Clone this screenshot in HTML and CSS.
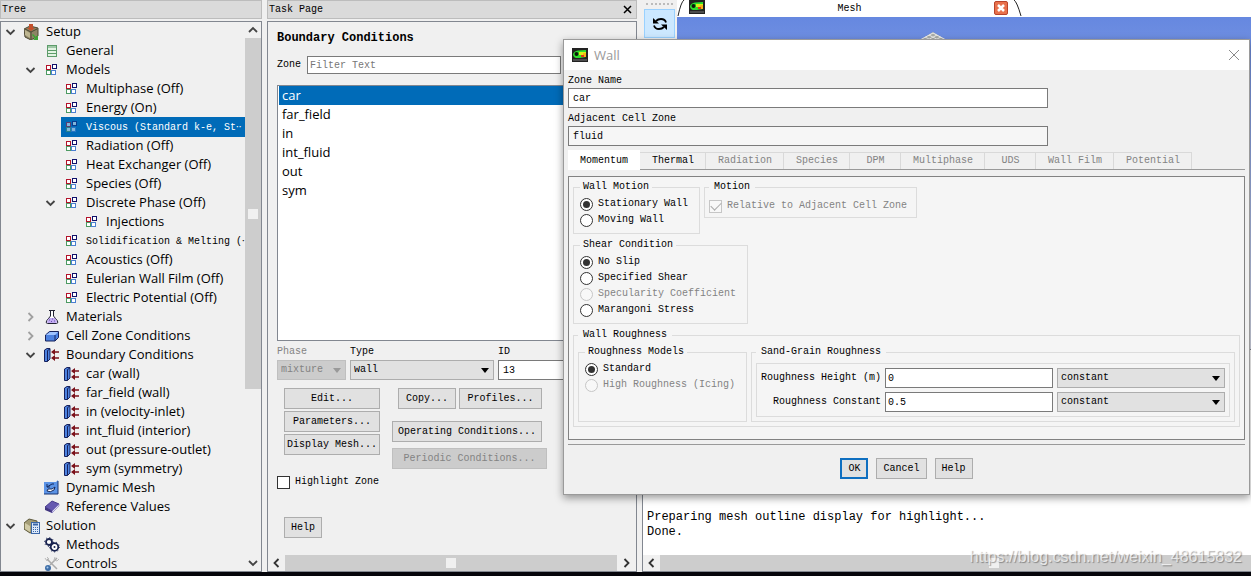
FILE: index.html
```html
<!DOCTYPE html>
<html lang="en">
<head>
    <meta charset="UTF-8">
    <meta name="viewport" content="width=device-width, initial-scale=1.0">
    <title>Boundary Conditions</title>
    <link rel="stylesheet" href="styles.css">
</head>
<body>
    <!-- Icon definitions -->
    <svg class="defs" width="0" height="0" aria-hidden="true">
        <symbol id="open" viewBox="0 0 16 16"><path d="M4 6l4 4 4-4" fill="none" stroke="#444" stroke-width="1.8"/></symbol>
        <symbol id="closed" viewBox="0 0 16 16"><path d="M6 4l4 4-4 4" fill="none" stroke="#a0a0a0" stroke-width="1.8"/></symbol>
        <symbol id="setup" viewBox="0 0 16 16">
            <path d="M0 5l6-3 8 2v8l-7 4-6-3z" fill="#8d8566" stroke="#4c4732"/>
            <path d="M1 5l6 3 6-3M7 8v7" fill="none" stroke="#4c4732"/>
            <path d="M1 6l5 3v5l-5-3z" fill="#bdb590"/>
            <path d="M5 0h4v4h2L7 7 3 4h2z" fill="#c4502c"/>
            <path d="M9 10l3 3 2-2v5h-5l2-2-3-3z" fill="#3fa535"/>
        </symbol>
        <symbol id="general" viewBox="0 0 16 16">
            <rect x="3.5" y="2.5" width="9" height="11" fill="#e3f3e3" stroke="#5d9c6a"/>
            <path d="M3 4h10M3 7.5h10M3 10.5h10" stroke="#5d9c6a"/>
        </symbol>
        <symbol id="model" viewBox="0 0 16 16">
            <rect x="2.5" y="3.5" width="4" height="4" fill="#fff" stroke="#b3122a"/>
            <rect x="8.5" y="2.5" width="4" height="4" fill="#fff" stroke="#10106a"/>
            <rect x="2.5" y="8.5" width="4" height="4" fill="#fff" stroke="#4c9a62"/>
            <rect x="7.5" y="8.5" width="4" height="4" fill="#fff" stroke="#4a7fd0"/>
        </symbol>
        <symbol id="materials" viewBox="0 0 16 16">
            <path d="M5 1.5h6M6.5 2v5L2.5 12q-1 2.5 1 2.5h9q2 0 1-2.5L9.5 7V2" fill="#fff" stroke="#223"/>
            <path d="M5 9h6l2 3.500q0 1.500-1 1.500H4q-1 0-1-1.500z" fill="#c3adf2"/>
            <path d="M5 11h1M8 10h1M7 12.500h1M10 12h1" stroke="#6a4fb0"/>
        </symbol>
        <symbol id="cell" viewBox="0 0 16 16">
            <path d="M1.5 7l4-3.500h9v6L11 13H1.500z" fill="#4d82e0" stroke="#17225c"/>
            <path d="M2 7l4-3h8l-3 3z" fill="#9fc3ff"/><path d="M11 7v6" stroke="#17225c"/>
        </symbol>
        <symbol id="bc" viewBox="0 0 16 16">
            <path d="M.5 3L3 1.500h3V12l-2.500 2.500h-3z" fill="#4d82e0" stroke="#17225c"/>
            <path d="M3.500 3.500v11M3.500 3.500L6 2" stroke="#17225c"/>
            <path d="M9 5h6M9 11h6" stroke="#7a0f18" stroke-width="1.500"/>
            <path d="M7 5l4-3v6zM7 11l4-3v6z" fill="#7a0f18"/>
        </symbol>
        <symbol id="dynamic" viewBox="0 0 16 16">
            <path d="M0 2h12l2-2v14H0z" fill="#5b93e6"/><path d="M0 14h14V1" fill="none" stroke="#1a3470"/>
            <path d="M3 11q3 2 7-1l1-3-3 2-4 0z" fill="#fff" stroke="#15295c"/>
            <path d="M3 7l5-3h2M3 4v3h3" fill="none" stroke="#15295c"/>
        </symbol>
        <symbol id="reference" viewBox="0 0 16 16">
            <path d="M1 8l7-6 7 3-7 7z" fill="#6558b0" stroke="#483c8c"/>
            <path d="M1 8v3l7 3v-2z" fill="#413580"/><path d="M8 12l7-7v2l-7 7z" fill="#dcd8ee" stroke="#6558b0" stroke-width=".5"/>
        </symbol>
        <symbol id="solution" viewBox="0 0 16 16">
            <path d="M0 5l5-4 8 2v10l-7 2-6-4z" fill="#a39c74" stroke="#5f5a3d"/><path d="M1 5l5 3v6l-5-3z" fill="#d0caa5"/>
            <rect x="7.500" y="4.500" width="8" height="11" fill="#dce9fa" stroke="#3b67a8"/>
            <path d="M9 6.500h5" stroke="#3b67a8" stroke-width="2"/>
            <path d="M9 9.500h5M9 11.500h5M9 13.500h5" stroke="#3b67a8" stroke-dasharray="1 1"/>
        </symbol>
        <symbol id="methods" viewBox="0 0 16 16">
            <circle cx="5" cy="5" r="3" fill="#fff" stroke="#18224f" stroke-width="1.800"/>
            <circle cx="5" cy="5" r="4.500" fill="none" stroke="#18224f" stroke-dasharray="1 2.500"/>
            <circle cx="10.500" cy="10" r="3.800" fill="#fff" stroke="#18224f" stroke-width="1.800"/>
            <circle cx="10.500" cy="10" r="5" fill="none" stroke="#18224f" stroke-dasharray="1 2.500"/>
            <circle cx="10.500" cy="10" r="1" fill="#18224f"/>
        </symbol>
        <symbol id="controls" viewBox="0 0 16 16">
            <path d="M3 3l10 10M13 2L6 9" stroke="#aaa" stroke-width="1.500"/>
            <path d="M1 2l2 3 2-2-2-2M11 1l-1 3 3 1 2-2" fill="none" stroke="#bbb"/>
            <circle cx="4" cy="12" r="3" fill="#3f6fa8"/><circle cx="3.500" cy="11.500" r="1" fill="#a9c8ea"/>
        </symbol>
        <symbol id="fluent" viewBox="0 0 16 14">
            <path d="M0 0h16v14H0z" fill="#222"/>
            <path d="M1 6q1-3 5-3.500L14 2v7l-6 1H4Q1 9 1 6z" fill="#2ee02e"/>
            <path d="M7 4h7v3H7z" fill="#d8f018"/>
            <path d="M11 5h3v4h-3z" fill="#f5b414"/>
            <path d="M9 7h3v2H9z" fill="#e03a18"/>
            <circle cx="4.500" cy="6" r="2" fill="#0a1a0a"/>
            <path d="M1 12h14" stroke="#777"/>
        </symbol>
    </svg>

    <div class="app">
        <section class="pane">
            <h2 class="pane-title">Tree</h2>
            <div class="pane-body tree">
                <ul class="tree-list">
                    <li>
                        <div class="row"><svg class="exp"><use href="#open"/></svg><span class="label"><svg><use href="#setup"/></svg>Setup</span></div>
                        <ul>
                            <li><div class="row"><span class="exp"></span><span class="label"><svg><use href="#general"/></svg>General</span></div></li>
                            <li>
                                <div class="row"><svg class="exp"><use href="#open"/></svg><span class="label"><svg><use href="#model"/></svg>Models</span></div>
                                <ul>
                                    <li><div class="row"><span class="exp"></span><span class="label"><svg><use href="#model"/></svg>Multiphase (Off)</span></div></li>
                                    <li><div class="row"><span class="exp"></span><span class="label"><svg><use href="#model"/></svg>Energy (On)</span></div></li>
                                    <li><div class="row"><span class="exp"></span><span class="label mono selected"><svg><use href="#model"/></svg><span>Viscous (Standard k-e, St<span class="dots">··</span></span></span></div></li>
                                    <li><div class="row"><span class="exp"></span><span class="label"><svg><use href="#model"/></svg>Radiation (Off)</span></div></li>
                                    <li><div class="row"><span class="exp"></span><span class="label"><svg><use href="#model"/></svg>Heat Exchanger (Off)</span></div></li>
                                    <li><div class="row"><span class="exp"></span><span class="label"><svg><use href="#model"/></svg>Species (Off)</span></div></li>
                                    <li>
                                        <div class="row"><svg class="exp"><use href="#open"/></svg><span class="label"><svg><use href="#model"/></svg>Discrete Phase (Off)</span></div>
                                        <ul>
                                            <li><div class="row"><span class="exp"></span><span class="label"><svg><use href="#model"/></svg>Injections</span></div></li>
                                        </ul>
                                    </li>
                                    <li><div class="row"><span class="exp"></span><span class="label mono"><svg><use href="#model"/></svg><span>Solidification &amp; Melting (<span class="dots">·</span></span></span></div></li>
                                    <li><div class="row"><span class="exp"></span><span class="label"><svg><use href="#model"/></svg>Acoustics (Off)</span></div></li>
                                    <li><div class="row"><span class="exp"></span><span class="label"><svg><use href="#model"/></svg>Eulerian Wall Film (Off)</span></div></li>
                                    <li><div class="row"><span class="exp"></span><span class="label"><svg><use href="#model"/></svg>Electric Potential (Off)</span></div></li>
                                </ul>
                            </li>
                            <li><div class="row"><svg class="exp"><use href="#closed"/></svg><span class="label"><svg><use href="#materials"/></svg>Materials</span></div></li>
                            <li><div class="row"><svg class="exp"><use href="#closed"/></svg><span class="label"><svg><use href="#cell"/></svg>Cell Zone Conditions</span></div></li>
                            <li>
                                <div class="row"><svg class="exp"><use href="#open"/></svg><span class="label"><svg><use href="#bc"/></svg>Boundary Conditions</span></div>
                                <ul>
                                    <li><div class="row"><span class="exp"></span><span class="label"><svg><use href="#bc"/></svg>car (wall)</span></div></li>
                                    <li><div class="row"><span class="exp"></span><span class="label"><svg><use href="#bc"/></svg>far_field (wall)</span></div></li>
                                    <li><div class="row"><span class="exp"></span><span class="label"><svg><use href="#bc"/></svg>in (velocity-inlet)</span></div></li>
                                    <li><div class="row"><span class="exp"></span><span class="label"><svg><use href="#bc"/></svg>int_fluid (interior)</span></div></li>
                                    <li><div class="row"><span class="exp"></span><span class="label"><svg><use href="#bc"/></svg>out (pressure-outlet)</span></div></li>
                                    <li><div class="row"><span class="exp"></span><span class="label"><svg><use href="#bc"/></svg>sym (symmetry)</span></div></li>
                                </ul>
                            </li>
                            <li><div class="row"><span class="exp"></span><span class="label"><svg><use href="#dynamic"/></svg>Dynamic Mesh</span></div></li>
                            <li><div class="row"><span class="exp"></span><span class="label"><svg><use href="#reference"/></svg>Reference Values</span></div></li>
                        </ul>
                    </li>
                    <li>
                        <div class="row"><svg class="exp"><use href="#open"/></svg><span class="label"><svg><use href="#solution"/></svg>Solution</span></div>
                        <ul>
                            <li><div class="row"><span class="exp"></span><span class="label"><svg><use href="#methods"/></svg>Methods</span></div></li>
                            <li><div class="row"><span class="exp"></span><span class="label"><svg><use href="#controls"/></svg>Controls</span></div></li>
                        </ul>
                    </li>
                </ul>
                <div class="vscroll">
                    <svg width="16" height="16" viewBox="0 0 16 16"><path d="M4 10l4-4 4 4" fill="none" stroke="#444" stroke-width="1.8"/></svg>
                    <div class="thumb"><i></i></div>
                    <svg width="16" height="16"><use href="#open"/></svg>
                </div>
            </div>
        </section>

        <section class="pane">
            <h2 class="pane-title">Task Page
                <button class="pane-close" type="button" aria-label="Close"><svg width="9" height="9" viewBox="0 0 9 9"><path d="M1 1l7 7M8 1L1 8" stroke="#000" stroke-width="1.5"/></svg></button>
            </h2>
            <div class="pane-body task">
                <form class="task-form">
                    <h1>Boundary Conditions</h1>
                    <div class="zone-filter">
                        <label for="filter">Zone</label>
                        <input type="text" id="filter" placeholder="Filter Text">
                    </div>
                    <ul class="zones">
                        <li class="selected">car</li>
                        <li>far_field</li>
                        <li>in</li>
                        <li>int_fluid</li>
                        <li>out</li>
                        <li>sym</li>
                    </ul>
                    <div class="zone-info">
                        <label class="off" for="phase">Phase</label>
                        <label for="type">Type</label>
                        <label for="zoneId">ID</label>
                        <span class="select"><select id="phase" disabled><option>mixture</option></select></span>
                        <span class="select"><select id="type"><option>wall</option></select></span>
                        <input type="text" id="zoneId" value="13">
                    </div>
                    <div class="actions">
                        <div class="actions-left">
                            <button type="button">Edit...</button>
                            <button type="button">Parameters...</button>
                            <button type="button">Display Mesh...</button>
                        </div>
                        <div class="actions-right">
                            <div class="pair">
                                <button type="button">Copy...</button>
                                <button type="button">Profiles...</button>
                            </div>
                            <button class="operating" type="button">Operating Conditions...</button>
                            <button class="periodic" type="button" disabled>Periodic Conditions...</button>
                        </div>
                    </div>
                    <label class="check highlight"><input type="checkbox"> Highlight Zone</label>
                    <button class="help" type="button">Help</button>
                </form>
                <div class="hscroll">
                    <svg width="17" height="16" viewBox="0 0 16 16"><path d="M10 4L6 8l4 4" fill="none" stroke="#333" stroke-width="1.8"/></svg>
                    <div class="thumb"><i></i></div>
                    <svg width="19" height="16" viewBox="0 0 16 16"><path d="M6 4l4 4-4 4" fill="none" stroke="#333" stroke-width="1.8"/></svg>
                </div>
            </div>
        </section>

        <section class="graphics">
            <div class="view">
                <div class="toolbar">
                    <button type="button" aria-label="Refresh">
                        <svg width="16" height="16" viewBox="0 0 16 16">
                            <path d="M14 6.500Q13 3 9 3 6 3 4 5M2 9.500Q3 13 7 13q3 0 5-2" fill="none" stroke="#000" stroke-width="1.8"/>
                            <path d="M1 2v5.500h6zM15 14V8.500H9z"/>
                        </svg>
                    </button>
                </div>
                <div class="window">
                    <div class="tab-bar">
                        <svg class="edge" width="8" height="17" viewBox="0 0 8 17"><path d="M1 16Q4 2 7 0" fill="none" stroke="#222"/></svg>
                        <svg class="tab-icon" width="16" height="14"><use href="#fluent"/></svg>
                        <span class="tab-name">Mesh</span>
                        <button type="button" aria-label="Close tab"><svg width="14" height="14" viewBox="0 0 14 14"><rect x=".5" y=".5" width="13" height="13" rx="1.5" fill="#e8714c" stroke="#b8432a"/><path d="M4 4l6 6M10 4l-6 6" stroke="#fff" stroke-width="2.5"/></svg></button>
                        <svg class="edge" width="8" height="17" viewBox="0 0 8 17"><path d="M0 0Q3 2 7 16" fill="none" stroke="#222"/></svg>
                    </div>
                    <div class="canvas">
                        <svg width="30" height="14" viewBox="0 0 30 14"><path d="M0 9L15 0l15 9-15 5z" fill="#a9ada8"/><path d="M2 8L15 1l13 7M6 10l13-7M11 11l12-6M24 10L11 3M19 11L7 5" fill="none" stroke="#eee"/></svg>
                    </div>
                </div>
            </div>
            <div class="console">
                <pre>Preparing mesh outline display for highlight...
Done.</pre>
                <div class="hscroll">
                    <svg width="17" height="16" viewBox="0 0 16 16"><path d="M10 4L6 8l4 4" fill="none" stroke="#333" stroke-width="1.8"/></svg>
                    <div class="thumb"><i></i></div>
                </div>
            </div>
        </section>
    </div>

    <div class="dialog" role="dialog" aria-labelledby="dialogTitle">
        <div class="dialog-title">
            <svg width="16" height="14"><use href="#fluent"/></svg>
            <span id="dialogTitle">Wall</span>
            <button type="button" aria-label="Close"><svg width="12" height="12" viewBox="0 0 12 12"><path d="M1 1l10 10M11 1L1 11" stroke="#8a8a8a"/></svg></button>
        </div>
        <form class="dialog-body">
            <label for="zoneName">Zone Name</label>
            <input class="wide" type="text" id="zoneName" value="car">
            <label for="adjacent">Adjacent Cell Zone</label>
            <input class="wide" type="text" id="adjacent" value="fluid" readonly>

            <div class="tabs" role="tablist">
                <button class="active" type="button" role="tab">Momentum</button>
                <button type="button" role="tab">Thermal</button>
                <button type="button" role="tab" disabled>Radiation</button>
                <button type="button" role="tab" disabled>Species</button>
                <button type="button" role="tab" disabled>DPM</button>
                <button type="button" role="tab" disabled>Multiphase</button>
                <button type="button" role="tab" disabled>UDS</button>
                <button type="button" role="tab" disabled>Wall Film</button>
                <button type="button" role="tab" disabled>Potential</button>
            </div>

            <div class="panel">
                <div class="panel-row">
                    <fieldset>
                        <legend>Wall Motion</legend>
                        <label class="check"><input type="radio" name="motion" checked> Stationary Wall</label>
                        <label class="check"><input type="radio" name="motion"> Moving Wall</label>
                    </fieldset>
                    <fieldset class="relative">
                        <legend>Motion</legend>
                        <label class="check off"><input type="checkbox" checked disabled> Relative to Adjacent Cell Zone</label>
                    </fieldset>
                </div>
                <div class="panel-row">
                    <fieldset>
                        <legend>Shear Condition</legend>
                        <label class="check"><input type="radio" name="shear" checked> No Slip</label>
                        <label class="check"><input type="radio" name="shear"> Specified Shear</label>
                        <label class="check off"><input type="radio" name="shear" disabled> Specularity Coefficient</label>
                        <label class="check"><input type="radio" name="shear"> Marangoni Stress</label>
                    </fieldset>
                </div>
                <fieldset class="roughness">
                    <legend>Wall Roughness</legend>
                    <div class="roughness-row">
                        <fieldset>
                            <legend>Roughness Models</legend>
                            <label class="check"><input type="radio" name="rough" checked> Standard</label>
                            <label class="check off"><input type="radio" name="rough" disabled> High Roughness (Icing)</label>
                        </fieldset>
                        <fieldset class="sand">
                            <legend>Sand-Grain Roughness</legend>
                            <div class="sand-grid">
                                <label for="height">Roughness Height (m)</label>
                                <input type="text" id="height" value="0">
                                <span class="select"><select aria-label="Height profile"><option>constant</option></select></span>
                                <label for="constant">Roughness Constant</label>
                                <input type="text" id="constant" value="0.5">
                                <span class="select"><select aria-label="Constant profile"><option>constant</option></select></span>
                            </div>
                        </fieldset>
                    </div>
                </fieldset>
            </div>

            <div class="dialog-buttons">
                <button class="default" type="submit">OK</button>
                <button type="button">Cancel</button>
                <button type="button">Help</button>
            </div>
        </form>
    </div>
    <div class="watermark">https://blog.csdn.net/weixin_48615832</div>
</body>
</html>
```
FILE: styles.css
```css
* {
    box-sizing: border-box;
}

body {
    position: relative;
    display: flex;
    height: 100vh;
    margin: 0;
    overflow: hidden;
    border-bottom: 4px solid #05050a;
    background: #f0f0f0;
    color: #000;
    font: 10px/12px "Liberation Mono", monospace;
}

.defs {
    position: absolute;
}

.app {
    flex: 1;
    display: grid;
    grid-template-columns: 262px 370px 1fr;
    gap: 5px;
    min-height: 0;
}

h1, h2, ul, pre {
    margin: 0;
    padding: 0;
}

ul {
    list-style: none;
}

svg {
    flex: none;
    display: block;
}

input, select, button {
    margin: 0;
    color: inherit;
    font: inherit;
    border-radius: 0;
}

input[type="text"] {
    height: 20px;
    min-width: 0;
    padding: 0 4px;
    border: 1px solid #7a7a7a;
    background: #fff;
}

input[type="text"][readonly] {
    background: #f6f6f6;
}

input::placeholder {
    color: #777;
}

button {
    height: 21px;
    padding: 0 2px;
    border: 1px solid #adadad;
    background: #e1e1e1;
    white-space: nowrap;
}

button:disabled {
    border-color: #bfbfbf;
    background: #ccc;
    color: #838383;
}

.select {
    position: relative;
    display: block;
}

.select::after {
    content: "";
    position: absolute;
    right: 5px;
    top: 8px;
    border: 4px solid transparent;
    border-top: 5px solid #000;
    border-bottom: 0;
    pointer-events: none;
}

.select:has(:disabled)::after {
    border-top-color: #999;
}

select {
    appearance: none;
    display: block;
    width: 100%;
    height: 20px;
    padding: 0 3px;
    border: 1px solid #adadad;
    background: #e1e1e1;
}

select:disabled {
    border-color: #bfbfbf;
    background: #ccc;
    color: #838383;
    opacity: 1;
}

.off {
    color: #838383;
}

.check {
    display: flex;
    align-items: center;
    gap: 5px;
    height: 16px;
    white-space: nowrap;
}

.check input {
    appearance: none;
    flex: none;
    display: grid;
    place-items: center;
    width: 13px;
    height: 13px;
    border: 1px solid #333;
    background: #fff;
}

.check input[type="radio"] {
    border-radius: 50%;
}

.check input[type="radio"]:checked::after {
    content: "";
    width: 7px;
    height: 7px;
    border-radius: 50%;
    background: #333;
}

.check input[type="checkbox"]:checked::after {
    content: "";
    width: 9px;
    height: 5px;
    border: solid #aaa;
    border-width: 0 0 1px 1px;
    transform: translateY(-1px) rotate(-45deg);
}

.check input:disabled {
    border-color: #c6c6c6;
    background: #f8f8f8;
}

/* Docked panes */
.pane {
    display: flex;
    flex-direction: column;
    gap: 2px;
    min-width: 0;
    min-height: 0;
}

.pane-title {
    display: flex;
    align-items: center;
    justify-content: space-between;
    height: 19px;
    padding: 0 4px 0 1px;
    border: 1px solid #bcbcbc;
    background: #dadada;
    font-size: 10px;
    font-weight: normal;
}

.pane-close {
    height: 9px;
    padding: 0;
    border: 0;
    background: none;
}

.pane-body {
    flex: 1;
    display: flex;
    min-height: 0;
    border: 1px solid #828790;
}

/* Tree */
.tree-list {
    flex: 1;
    min-width: 0;
    overflow: hidden;
    font: 13px/19px "Open Sans", sans-serif;
}

.tree-list ul {
    padding-left: 20px;
}

.row {
    display: flex;
    align-items: center;
    height: 19px;
}

.exp {
    flex: none;
    width: 20px;
    height: 16px;
    padding-right: 1px;
}

.label {
    flex: 1;
    display: flex;
    align-items: center;
    gap: 6px;
    min-width: 0;
    padding-left: 3px;
    white-space: nowrap;
}

.label svg {
    width: 16px;
    height: 16px;
}

.label.mono {
    font: 10px/19px "Liberation Mono", monospace;
}

.dots {
    font-family: "Open Sans", sans-serif;
}

.selected {
    background: #006bb8;
    color: #fff;
}

.label.selected svg {
    opacity: 0.5;
}

.vscroll {
    display: flex;
    flex-direction: column;
    justify-content: space-between;
    width: 16px;
}

.vscroll .thumb {
    flex: 0 0 64%;
    margin-bottom: auto;
}

.thumb {
    display: grid;
    place-items: center;
    background: #cdcdcd;
}

.thumb i {
    width: 10px;
    height: 10px;
    background: #f0f0f0;
}

.hscroll {
    display: flex;
    height: 16px;
    background: #f0f0f0;
}

.hscroll .thumb {
    flex: 1;
}

/* Task page */
.task {
    flex-direction: column;
}

.task-form {
    flex: 1;
    display: flex;
    flex-direction: column;
    align-items: flex-start;
    min-height: 0;
    padding: 8px 9px;
}

.task h1 {
    font-size: 12px;
    line-height: 16px;
}

.zone-filter {
    display: flex;
    align-items: center;
    gap: 6px;
    margin-top: 10px;
}

.zone-filter input {
    width: 254px;
    height: 18px;
    padding: 0 2px;
}

.zones {
    align-self: stretch;
    height: 256px;
    margin-top: 11px;
    padding: 0 1px;
    border: 1px solid #828790;
    background: #fff;
    font: 13px/19px "Open Sans", sans-serif;
}

.zones li {
    padding: 0 3px;
}

.zone-info {
    display: grid;
    grid-template-columns: 69px 144px 1fr;
    gap: 2px 4px;
    align-self: stretch;
    margin-top: 5px;
}

.actions {
    display: flex;
    gap: 12px;
    margin: 8px 0 0 7px;
}

.actions-left {
    display: flex;
    flex-direction: column;
    gap: 2px;
    width: 96px;
}

.actions-right {
    display: flex;
    flex-direction: column;
    align-items: flex-start;
}

.pair {
    display: grid;
    grid-template-columns: 58px 83px;
    gap: 3px;
    padding-left: 6px;
}

.operating {
    width: 150px;
    margin-top: 12px;
}

.periodic {
    width: 155px;
    margin-top: 6px;
}

.highlight {
    margin-top: 5px;
}

.help {
    margin: 27px 0 0 7px;
    padding: 0 6px;
}

/* Graphics window and console */
.graphics {
    display: grid;
    grid-template-rows: 349px 1fr;
    min-width: 0;
    min-height: 0;
}

.view {
    display: flex;
}

.toolbar {
    width: 35px;
    padding: 3px 2px;
}

.toolbar::before {
    content: "";
    display: block;
    margin: 0 2px 4px;
    border-top: 2px dotted #bbb;
}

.toolbar button {
    display: grid;
    place-items: center;
    width: 31px;
    height: 29px;
    border: 1px solid #99d1ff;
    background: #cce8ff;
}

.window {
    flex: 1;
    display: flex;
    flex-direction: column;
}

.tab-bar {
    display: flex;
    height: 17px;
    background: #fff;
}

.tab-icon {
    margin-left: 4px;
}

.tab-name {
    width: 289px;
    padding-top: 3px;
    text-align: center;
}

.tab-bar button {
    height: 14px;
    margin: 1px 6px 0 0;
    padding: 0;
    border: 0;
    background: none;
}

.canvas {
    flex: 1;
    padding: 15px 0 0 241px;
    background: linear-gradient(#6688e0, #d8dcea);
}

.console {
    display: flex;
    flex-direction: column;
    justify-content: space-between;
    border: 1px solid #828790;
    border-right: 0;
    background: #fff;
}

.console pre {
    padding: 160px 4px 0;
    font: 12px/15px "Liberation Mono", monospace;
}

.console .thumb {
    padding-left: 76px;
}

/* Wall dialog */
.dialog {
    position: absolute;
    top: 39px;
    right: 1px;
    left: 563px;
    border: 1px solid #9a9a9a;
    background: #f0f0f0;
    box-shadow: 0 3px 8px rgba(0, 0, 0, 0.4);
}

.dialog-title {
    display: flex;
    align-items: center;
    gap: 6px;
    height: 30px;
    padding: 0 9px 0 8px;
    background: #fff;
    color: #999;
    font: 13px/18px "Open Sans", sans-serif;
}

.dialog-title button {
    height: 12px;
    margin-left: auto;
    padding: 0;
    border: 0;
    background: none;
}

.dialog-body {
    display: flex;
    flex-direction: column;
    padding: 4px 4px 15px;
}

.dialog-body > label {
    height: 14px;
    line-height: 14px;
}

.wide {
    width: 480px;
    margin-bottom: 4px;
}

.tabs {
    display: flex;
    align-items: flex-end;
    height: 20px;
    border-bottom: 1px solid #999;
}

.tabs button {
    min-width: 51px;
    height: 17px;
    padding: 0 11px 0 12px;
    border: solid #d9d9d9;
    border-width: 1px 1px 0 0;
    background: #f0f0f0;
}

.tabs .active {
    height: 20px;
    margin-bottom: -1px;
    border-color: #fff;
    background: #fff;
}

.panel {
    display: flex;
    flex-direction: column;
    gap: 5px;
    margin-top: 6px;
    padding: 4px 4px 12px;
    border: 1px solid #828282;
    background: #f5f5f5;
}

.panel-row {
    display: flex;
    align-items: flex-start;
    gap: 4px;
}

fieldset {
    min-width: 0;
    margin: 0;
    padding: 3px 11px 5px 6px;
    border: 1px solid #dcdcdc;
}

legend {
    padding: 0 3px;
}

.relative {
    padding: 5px 9px 3px 4px;
}

.relative legend {
    padding: 0 5px;
}

.roughness {
    padding: 5px 4px 4px;
}

.roughness > legend {
    padding: 0 5px;
}

.roughness-row {
    display: flex;
    gap: 4px;
}

.sand {
    flex: 1;
    padding: 5px 4px 4px;
}

.sand legend {
    padding: 0 5px;
}

.sand-grid {
    display: grid;
    grid-template-columns: max-content 1fr 1fr;
    align-items: center;
    gap: 4px;
    padding: 4px;
    border: 1px solid #dcdcdc;
    text-align: right;
}

.sand-grid input {
    padding: 0 2px;
}

.dialog-buttons {
    display: flex;
    justify-content: center;
    gap: 8px;
    margin-top: 4px;
    padding-top: 13px;
    border-top: 1px solid #999;
}

.dialog-buttons button {
    padding: 0 6px;
}

.dialog-buttons .default {
    border: 2px solid #0f6fc0;
}

.watermark {
    position: absolute;
    right: 9px;
    bottom: 5px;
    color: rgba(255, 255, 255, 0.7);
    font: 16px/20px "Liberation Sans", sans-serif;
    text-shadow: 1px 1px 1px rgba(0, 0, 0, 0.35);
    pointer-events: none;
}
```
